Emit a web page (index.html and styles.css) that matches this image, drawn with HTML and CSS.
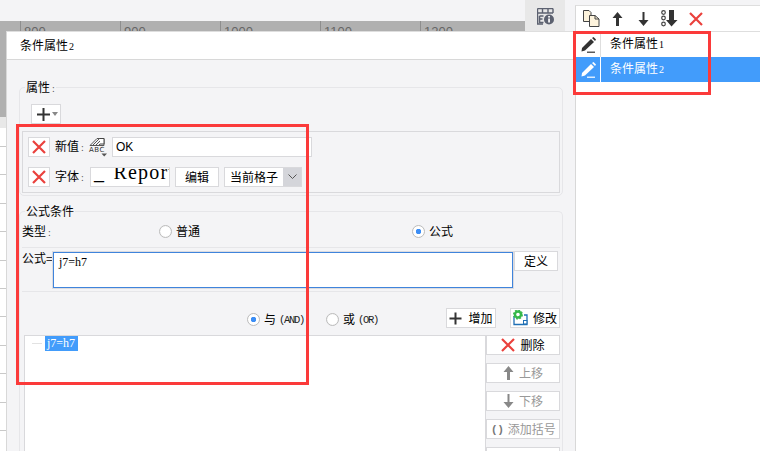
FILE: index.html
```html
<!DOCTYPE html>
<html lang="zh">
<head>
<meta charset="utf-8">
<title>条件属性</title>
<link rel="stylesheet" href="styles.css">
</head>
<body>
<div class="stage">
  <div class="backdrop">
    <div class="top-strip"></div>
    <div class="ruler">
      <span class="ruler-cell">800</span><span class="ruler-cell">900</span><span class="ruler-cell">1000</span><span class="ruler-cell">1100</span><span class="ruler-cell">1200</span>
    </div>
    <div class="gray-area"></div>
    <div class="header-band"></div>
    <div class="sheet"></div>
  </div>

  <div class="info-tab">
    <svg width="17" height="17" viewBox="0 0 17 17"><path d="M0.5 0.5H16M0.5 0.5V16H6M0.5 5H16M5.5 0.5V5M11 0.5V5M16 0.5V5" fill="none" stroke="#5c6170" stroke-width="1.4"/><path d="M2.5 8H6.5M2.5 8V14.5H6.5M2.5 11H5.5" fill="none" stroke="#5c6170" stroke-width="1.6"/><circle cx="12" cy="11.5" r="5" fill="#5c6170"/><rect x="11.2" y="10.5" width="1.7" height="4" fill="#fff"/><rect x="11.2" y="8" width="1.7" height="1.6" fill="#fff"/></svg>
  </div>

  <section class="dialog">
    <header class="dialog-title">条件属性<span class="num">2</span></header>
    <div class="dialog-body">
      <div class="group group-props">
        <div class="legend">属性<span class="colon">:</span></div>
        <button class="btn add-btn">
          <svg width="15" height="15" viewBox="0 0 15 15"><path d="M7.5 1V14M1 7.5H14" stroke="#333" stroke-width="2"/></svg>
          <i class="caret"></i>
        </button>
        <div class="prop-box">
          <div class="prop-row">
            <button class="btn x-btn"><svg class="x-icon" width="14" height="14" viewBox="0 0 14 14"><path d="M1 1L13 13M13 1L1 13" stroke="#ea413d" stroke-width="2.2"/></svg></button>
            <span class="prop-label">新值<span class="colon">:</span></span>
            <span class="abc-icon">
              <svg width="19" height="20" viewBox="0 0 19 20"><path d="M1 8.5L8 1.5H15V8.5H1M3.5 8.5L10 2M6.5 8.5L12 3M9.5 8.5L12 6" fill="none" stroke="#555" stroke-width="1"/><path d="M11 1.5H15V7H11" fill="#fff" stroke="#444"/><path d="M12.5 16.5H18L15.2 19.5Z" fill="#555"/></svg>
              <em class="abc-text">ABC</em>
            </span>
            <input class="text-input" value="OK" readonly>
          </div>
          <div class="prop-row">
            <button class="btn x-btn"><svg class="x-icon" width="14" height="14" viewBox="0 0 14 14"><path d="M1 1L13 13M13 1L1 13" stroke="#ea413d" stroke-width="2.2"/></svg></button>
            <span class="prop-label font-label">字体<span class="colon">:</span></span>
            <div class="font-preview"><span>_ Report</span></div>
            <button class="btn edit-btn">编辑</button>
            <div class="combo"><span class="combo-text">当前格子</span><span class="combo-arrow"><svg width="9" height="6" viewBox="0 0 9 6"><path d="M0.5 0.5L4.5 4.5L8.5 0.5" fill="none" stroke="#555"/></svg></span></div>
          </div>
        </div>
      </div>

      <div class="group group-formula">
        <div class="legend">公式条件</div>
        <div class="type-row">
          <span class="type-label">类型<span class="colon">:</span></span>
          <label class="radio-item radio-normal"><i class="radio"></i>普通</label>
          <label class="radio-item radio-formula"><i class="radio on"></i>公式</label>
        </div>
        <div class="formula-row">
          <span class="formula-label">公式=</span>
          <div class="formula-input">j7=h7</div>
          <button class="btn define-btn">定义</button>
        </div>
        <div class="logic-row">
          <label class="radio-item radio-and"><i class="radio on"></i>与<span class="mono">(AND)</span></label>
          <label class="radio-item radio-or"><i class="radio"></i>或<span class="mono">(OR)</span></label>
          <button class="btn act-btn add-cond"><svg width="13" height="13" viewBox="0 0 13 13"><path d="M6.5 0.5V12.5M0.5 6.5H12.5" stroke="#333" stroke-width="2"/></svg>增加</button>
          <button class="btn act-btn edit-cond"><svg width="15" height="16" viewBox="0 0 15 16"><path d="M1 6V14.5H14V5H11" fill="none" stroke="#1f6fb5" stroke-width="1.3"/><circle cx="5" cy="4.5" r="3" fill="none" stroke="#35b84a" stroke-width="2.4"/><circle cx="5" cy="4.5" r="4.4" fill="none" stroke="#35b84a" stroke-width="1.2" stroke-dasharray="2 1.4"/><rect x="10.5" y="10.5" width="3.4" height="3.4" fill="#fff" stroke="#1f6fb5"/></svg>修改</button>
        </div>
        <div class="cond-area">
          <div class="cond-list">
            <div class="cond-item"><i class="tree-line"></i><span class="cond-sel">j7=h7</span></div>
          </div>
          <div class="cond-buttons">
            <button class="btn side-btn"><svg width="14" height="14" viewBox="0 0 14 14"><path d="M1 1L13 13M13 1L1 13" stroke="#ea413d" stroke-width="2.2"/></svg>删除</button>
            <button class="btn side-btn off"><svg width="11" height="14" viewBox="0 0 11 14"><path d="M5.5 0L10.5 6H7V14H4V6H0.5Z" fill="#888"/></svg>上移</button>
            <button class="btn side-btn off"><svg width="11" height="14" viewBox="0 0 11 14"><path d="M5.5 14L10.5 8H6.5V0H4.5V8H0.5Z" fill="#888"/></svg>下移</button>
            <button class="btn side-btn off wide"><span class="paren">( )</span>添加括号</button>
            <button class="btn side-btn off"></button>
          </div>
        </div>
      </div>
    </div>
  </section>

  <aside class="panel">
    <div class="panel-tools">
      <svg class="t-copy" width="17" height="17" viewBox="0 0 17 17"><path d="M0.5 0.5H6L8 2.5V11.5H0.5Z" fill="#fdf3dc" stroke="#444"/><path d="M6.5 5.5H12L16 9V16.5H6.5Z" fill="#fdf3dc" stroke="#444"/><path d="M12 5.5V9H16" fill="none" stroke="#444"/></svg>
      <svg class="t-up" width="11" height="14" viewBox="0 0 11 14"><path d="M5.5 0L10.5 6H7V14H4V6H0.5Z" fill="#333"/></svg>
      <svg class="t-down" width="11" height="14" viewBox="0 0 11 14"><path d="M5.5 14L10.5 8H6.5V0H4.5V8H0.5Z" fill="#333"/></svg>
      <svg class="t-bottom" width="17" height="17" viewBox="0 0 17 17"><circle cx="2.5" cy="2.5" r="1.8" fill="none" stroke="#444" stroke-width="1.2"/><circle cx="2.5" cy="8" r="1.8" fill="none" stroke="#444" stroke-width="1.2"/><circle cx="2.5" cy="14" r="1.8" fill="none" stroke="#444" stroke-width="1.2"/><path d="M8 0H13V10H16.5L10.5 16.5L5 10H8Z" fill="#333"/></svg>
      <svg class="t-del" width="14" height="14" viewBox="0 0 14 14"><path d="M1 1L13 13M13 1L1 13" stroke="#ea413d" stroke-width="2.2"/></svg>
    </div>
    <ul class="cond-names">
      <li class="name-row">
        <span class="name-icon"><svg width="15" height="16" viewBox="0 0 15 16"><path d="M1 11L10 2L13 5L4 13.5L0.5 14.5Z" fill="#333"/><path d="M11 1L12.5 0L15 2.5L14 4Z" fill="#333"/><rect x="6" y="14.6" width="8" height="1.2" fill="#333"/></svg></span>
        <span class="name-text">条件属性<span class="num">1</span></span>
      </li>
      <li class="name-row selected">
        <span class="name-icon"><svg width="15" height="16" viewBox="0 0 15 16"><path d="M1 11L10 2L13 5L4 13.5L0.5 14.5Z" fill="#fff"/><path d="M11 1L12.5 0L15 2.5L14 4Z" fill="#fff"/><rect x="6" y="14.6" width="8" height="1.2" fill="#fff"/></svg></span>
        <span class="name-text">条件属性<span class="num">2</span></span>
      </li>
    </ul>
  </aside>

  <div class="mark mark-left"></div>
  <div class="mark mark-right"></div>
</div>
</body>
</html>
```

FILE: styles.css
```css
* { box-sizing: border-box; }
html, body { margin: 0; padding: 0; }
body {
  width: 760px; height: 451px; overflow: hidden;
  font: 12px/16px "Noto Sans CJK SC", "Liberation Sans", sans-serif;
  color: #000;
}
.stage { position: relative; width: 760px; height: 451px; overflow: hidden; background: #f4f4f6; }
ul { list-style: none; margin: 0; padding: 0; }

/* backdrop */
.backdrop { display: flex; flex-direction: column; height: 451px; width: 525px; }
.top-strip { height: 21px; background: #f4f4f6; flex: none; }
.ruler { height: 10px; display: flex; padding-left: 20px; background: #b0b0b0; overflow: hidden; flex: none; }
.ruler-cell {
  width: 100px; flex: none; border-left: 1px solid #8e8e8e; padding: 3px 0 0 3px;
  font: 13px/15px "Liberation Sans", sans-serif; color: #666;
}
.gray-area { height: 86px; background: #b0b0b0; flex: none; }
.header-band { height: 11px; background: #e8e8e8; flex: none; }
.sheet {
  flex: 1;
  background: repeating-linear-gradient(#fff 0, #fff 18px, #c9c9c9 18px, #c9c9c9 19px, #fff 19px, #fff 28.4px);
}

.info-tab {
  position: absolute; left: 525px; top: 0; width: 40px; height: 31px; background: #e8e8e8;
  display: flex; align-items: center; justify-content: center; padding-top: 2px;
}

/* dialog */
.dialog {
  position: absolute; left: 6px; top: 31px; width: 570px; height: 420px;
  border-left: 1px solid #d8d8d8; border-top: 1px solid #dedede;
  background: #f4f4f6; overflow: hidden;
}
.dialog-title {
  height: 28px; background: #fff; border-bottom: 1px solid #d8d8d8;
  padding: 0 0 0 13px; line-height: 25px;
}
.num { font: 10px/16px "Liberation Serif", serif; margin-left: 1px; }
.colon { font: 10px/16px "Liberation Serif", serif; color: #555; margin-left: 2px; }
.dialog-body { padding: 27px 0 0 12px; }
.group { position: relative; width: 544px; border: 1px solid #e6e6e9; border-radius: 5px; }
.legend {
  display: table; margin: -8px 0 0 5px; padding: 0 1px; background: #f4f4f6; height: 16px; line-height: 14px;
}
.group-props { height: 109px; }
.group-formula { margin-top: 15px; height: 300px; border-bottom: 0; }

.btn {
  display: flex; align-items: center; justify-content: center; padding: 0;
  background: #fff; border: 1px solid #d9d9dc; font: inherit; color: inherit;
}
.add-btn { width: 30px; height: 20px; margin: 7px 0 0 11px; gap: 1px; padding-left: 1px; }
.caret { width: 0; height: 0; border: 3.5px solid transparent; border-top: 4px solid #888; border-bottom: 0; }
.prop-box {
  margin: 7px 0 0 2px; width: 538px; height: 62px; border: 1px solid #d9d9dc;
  padding: 5px; display: flex; flex-direction: column; gap: 10px;
}
.prop-row { display: flex; align-items: center; height: 20px; }
.x-btn { width: 22px; height: 20px; flex: none; }
.prop-label { margin-left: 5px; width: 34px; flex: none; }
.abc-icon { position: relative; width: 19px; height: 20px; flex: none; margin-right: 4px; }
.abc-icon svg { display: block; }
.abc-text {
  position: absolute; left: 0; top: 9px; font: normal 7px/9px "DejaVu Sans", sans-serif; color: #333;
  letter-spacing: 0.5px;
}
.text-input {
  width: 200px; height: 20px; border: 1px solid #d9d9dc; background: #fff; padding: 0 3px;
  font: 12px "Liberation Sans", sans-serif; color: #000; outline: 0;
}
.font-label { width: 35px; }
.font-preview {
  width: 80px; height: 20px; background: #fff; border: 1px solid #d9d9dc; overflow: hidden; flex: none;
  font: 20px/3px "Liberation Serif", serif; white-space: nowrap; padding: 3px 0 0 3px;
  letter-spacing: 1.2px; word-spacing: 2px;
}
.edit-btn { width: 44px; height: 20px; margin-left: 5px; flex: none; }
.combo {
  display: flex; width: 78px; height: 20px; margin-left: 5px; background: #fff;
  border: 1px solid #d9d9dc; flex: none;
}
.combo-text { width: 58px; text-align: center; line-height: 18px; }
.combo-arrow { flex: 1; background: #d4d5da; display: flex; align-items: center; justify-content: center; }

.type-row { position: relative; height: 23px; margin: 5px 2px 0; border-bottom: 1px solid #e6e6e9; }
.type-label { position: absolute; left: 0; top: -2px; }
.radio-item { display: inline-flex; align-items: center; gap: 4px; white-space: nowrap; }
.radio-normal, .radio-formula { position: absolute; top: -2px; }
.radio-normal { left: 137px; }
.radio-formula { left: 390px; }
.radio {
  width: 13px; height: 13px; border-radius: 50%; border: 1px solid #bcbcbc; flex: none;
  background: radial-gradient(circle, #fff 55%, #e4e4e4 100%); position: relative;
}
.radio.on { background: radial-gradient(circle, #3d8ef5 0, #3d8ef5 2.5px, #fff 3px, #fff 65%, #e4e4e4 100%); }

.formula-row {
  display: flex; align-items: flex-start; height: 44px; margin: 0 2px; padding-top: 3px;
  border-bottom: 1px solid #e6e6e9; position: relative;
}
.formula-label { width: 30px; flex: none; margin-top: -1px; white-space: nowrap; }
.formula-input {
  width: 460px; height: 36px; margin: 1px 0 0 1px; border: 1px solid #3f84dc; background: #fff; outline: 1px solid #dcdce0;
  padding: 1px 5px; font: 12px/16px "Liberation Serif", serif; flex: none;
}
.define-btn { width: 44px; height: 20px; margin-left: 1px; flex: none; }

.logic-row { position: relative; height: 43px; }
.logic-row .radio-item { position: absolute; top: 18px; }
.radio-and { left: 227px; }
.radio-or { left: 306px; }
.mono {
  font: 10.5px/16px "Liberation Mono", monospace; letter-spacing: -1.3px; margin: 2px 0 0 -1px; color: #222;
}
.act-btn { position: absolute; top: 16px; width: 50px; height: 20px; gap: 6px; }
.add-cond { left: 426px; }
.edit-cond { left: 490px; gap: 5px; }

.cond-area { display: flex; margin-left: 4px; height: 200px; }
.cond-list { width: 462px; background: #fff; border: 1px solid #d9d9dc; }
.cond-item { display: flex; align-items: center; height: 15px; padding-left: 7px; }
.tree-line { width: 10px; height: 1px; background: #e2e2e2; margin-right: 3px; }
.cond-sel {
  width: 33px; height: 15px; background: #429cfb; color: #fff; padding-left: 2px;
  font: 12px/15px "Liberation Serif", serif;
}
.cond-buttons { width: 74px; display: flex; flex-direction: column; gap: 8px; }
.side-btn { width: 74px; height: 20px; gap: 5px; flex: none; }
.side-btn.off { color: #999; }
.side-btn.wide { gap: 5px; padding-left: 2px; }
.paren { font: bold 11px/16px "Liberation Sans", sans-serif; color: #777; word-spacing: 0; }

/* right panel */
.panel {
  position: absolute; left: 575px; top: 5px; width: 185px; height: 446px; background: #fff;
  border-left: 1px solid #d8d8d8; border-top: 1px solid #dedede;
}
.panel-tools { height: 26px; border-bottom: 1px solid #dedede; position: relative; display: flex; align-items: center; padding-left: 7px; }
.t-copy { margin-right: 12px; }
.t-up { margin-right: 15px; }
.t-down { margin-right: 12px; }
.t-bottom { margin-right: 11px; }
.name-row { display: flex; height: 25px; align-items: center; }
.name-icon { width: 25px; height: 25px; display: flex; align-items: center; justify-content: center; border-right: 1px solid #dedede; flex: none; }
.name-text { padding: 0 0 2px 10px; margin-left: -1px; }
.selected { background: #429cfb; color: #fff; }
.selected .name-icon { border-right-color: #fff; }

/* annotation marks */
.mark { position: absolute; border: 3px solid #fb3a3a; pointer-events: none; }
.mark-left { left: 16px; top: 124px; width: 293px; height: 261px; }
.mark-right { left: 573px; top: 31px; width: 138px; height: 64px; }
```
